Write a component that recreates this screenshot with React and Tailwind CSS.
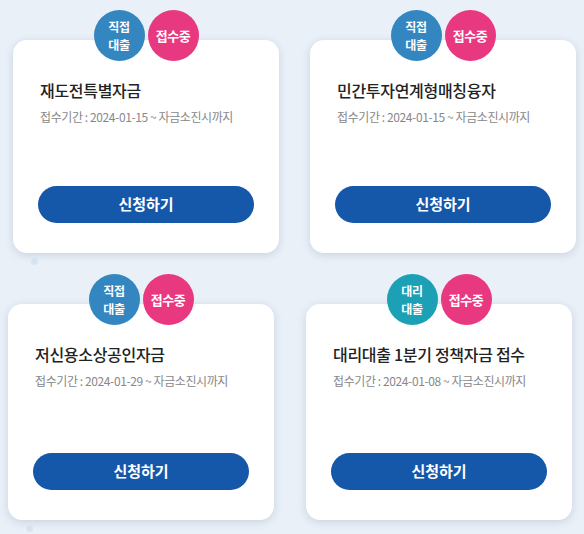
const FONT = { fontFamily: '"Noto Sans CJK KR", "Noto Sans", sans-serif' };

const loans = [
  { type: ["직접", "대출"], tone: "bg-[#3486c0]", title: "재도전특별자금", period: "2024-01-15 ~ 자금소진시까지" },
  { type: ["직접", "대출"], tone: "bg-[#3486c0]", title: "민간투자연계형매칭융자", period: "2024-01-15 ~ 자금소진시까지" },
  { type: ["직접", "대출"], tone: "bg-[#3486c0]", title: "저신용소상공인자금", period: "2024-01-29 ~ 자금소진시까지" },
  { type: ["대리", "대출"], tone: "bg-[#1ba0b5]", title: "대리대출 1분기 정책자금 접수", period: "2024-01-08 ~ 자금소진시까지" },
];

function LoanCard({ item, dot, tall }) {
  return (
    <div
      className={`relative w-[266px] ${tall ? "h-[216px]" : "h-[213px]"} rounded-[14px] bg-white shadow-[0_2px_8px_rgba(60,80,110,0.18)] flex flex-col pt-[38px] px-[25px] pb-[30px]`}
    >
      <div className="absolute -top-[30px] left-0 right-0 flex justify-center gap-[3px]">
        <div className={`w-[51px] h-[51px] rounded-full ${item.tone} text-white flex flex-col items-center justify-center text-[12px] font-bold leading-[17.5px] tracking-[-0.3px]`}>
          <span>{item.type[0]}</span>
          <span>{item.type[1]}</span>
        </div>
        <div className="w-[51px] h-[51px] rounded-full bg-[#e8387f] text-white flex items-center justify-center text-[13px] font-bold tracking-[-0.5px]">
          접수중
        </div>
      </div>
      <div className="pl-[2px] text-[16px] font-medium text-[#222] leading-[24px] tracking-[-0.3px]">{item.title}</div>
      <div className="pl-[2px] mt-[7px] text-[12px] text-[#888] leading-[16px] tracking-[-0.4px]">
        접수기간 : {item.period}
      </div>
      <button className="mt-auto h-[37px] w-full rounded-full bg-[#1557a8] text-white text-[15px] font-bold">
        신청하기
      </button>
      {dot && <div className="absolute -bottom-[12px] left-[18px] w-[7px] h-[7px] rounded-full bg-[#d6e4f2]" />}
    </div>
  );
}

export default function App() {
  return (
    <div className="w-[584px] h-[534px] overflow-hidden bg-[#e9f0f8]" style={FONT}>
      <div className="flex gap-[31px] pl-[13px] pt-[40px]">
        <LoanCard item={loans[0]} dot />
        <LoanCard item={loans[1]} />
      </div>
      <div className="flex gap-[32px] pl-[8px] pt-[51px]">
        <LoanCard item={loans[2]} dot tall />
        <LoanCard item={loans[3]} tall />
      </div>
    </div>
  );
}
